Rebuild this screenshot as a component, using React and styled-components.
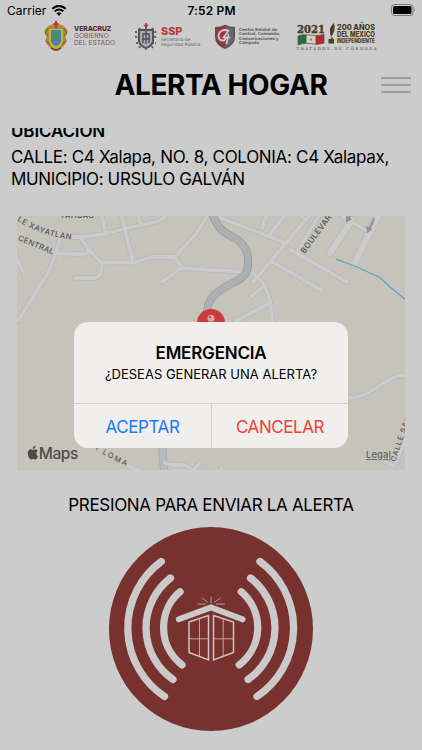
import React from "react";
import styled, { createGlobalStyle } from "styled-components";

const roads = [
  "M72 237 H80 L105 234 L123 229 L156 222 Q164 219 167 214",
  "M101.5 214 L106 234",
  "M121 214 L133.3 262.7",
  "M138 214 L140.7 225",
  "M81 238 L89 250 L101.7 262.7 V269 Q101 278 93 278 H75.5",
  "M55 253.5 L82 254 Q89 254 89 249",
  "M60 239 L54 259 Q51 267 46.7 275 L18.3 320.5",
  "M14 253 L24 273",
  "M101.7 262.7 H133.3 L151.7 257 H175 L181.7 268 L210 270 L247 271.7",
  "M162 281.7 L181.7 268",
  "M175 257 L196.7 233 L208 214",
  "M214 215.5 L286.7 243.3",
  "M262 228 L267 214",
  "M309 216 L286 243 L253.5 281.7",
  "M270 234 L286 214",
  "M299 214 L305 220",
  "M271.7 261.7 L321.5 290",
  "M290 249.5 L347 282",
  "M297 252 L320 214",
  "M340 214 L352 222 L371.7 234",
  "M249 271.7 Q257 275 262 282 Q268 291 270 301 L272.7 324",
  "M251.5 296 L262.5 287.5",
  "M270 303 L236 321",
  "M346 398 Q360 398 369 392 L389 380 Q397 375 407 375.5",
  "M165 463 Q172 466 178 465 Q185 464 190 468",
  "M191 472 L200 463",
  "M128 466 L142 472",
  "M385 462 L394 466 L407 436",
  "M221.7 468 V472",
];

const wideRoads = ["M352 220 L330 253", "M379 214 L354.3 264"];

const highway =
  "M212 213 C217 226 221 231 231 236 C243 242 249 250 248 263 C248 274 243 278 233 283 C218 290 210 297 208 306 L205 325";

const StreetMap = () => (
  <MapDrawing viewBox="17 216 388 254">
    <g fill="none" strokeLinecap="round" strokeLinejoin="round">
      <path d="M161.5 440 L164.5 474" stroke="#a6a7ac" strokeWidth="8.2" />
      <path d="M161.5 440 L164.5 474" stroke="#b8b9bd" strokeWidth="6.6" />
      {roads.map((d) => (
        <path key={d} d={d} stroke="#b4b4b8" strokeWidth="5" />
      ))}
      {wideRoads.map((d) => (
        <path key={d} d={d} stroke="#b4b4b8" strokeWidth="7.8" />
      ))}
      {roads.map((d) => (
        <path key={d} d={d} stroke="#cbcbcd" strokeWidth="3.8" />
      ))}
      {wideRoads.map((d) => (
        <path key={d} d={d} stroke="#cbcbcd" strokeWidth="6.6" />
      ))}
      <path d={highway} stroke="#92979a" strokeWidth="8" />
      <path d={highway} stroke="#abb0b3" strokeWidth="6.6" />
      <path
        d="M336.7 259.3 L357 267 L380 277.5 L390 287 L406 300"
        stroke="#5ba5be"
        strokeWidth="1.3"
      />
      <path d="M350 216 L347.5 220" stroke="#919196" strokeWidth="2.2" />
      <path d="M374 219 L369 230" stroke="#919196" strokeWidth="2" />
    </g>
    <g fill="#919196">
      <path d="M346 216 L352 219 L346 223 Z" />
      <path d="M366 226 L372.5 229 L367 233.5 Z" />
    </g>
    <g fontFamily="Inter, sans-serif" fontSize="7.7" fontWeight="500" fill="#555556">
      <path id="xayatlan" d="M17 220.5 Q44 237.5 74 239.5" fill="none" />
      <path id="central" d="M17.5 240 L55 255.5" fill="none" />
      <path id="loma" d="M88 444 Q105 457 131 468" fill="none" />
      <text>
        <textPath href="#xayatlan" textLength="58">LE XAYATLAN</textPath>
      </text>
      <text>
        <textPath href="#central" textLength="38">CENTRAL</textPath>
      </text>
      <text fontSize="7.3">
        <textPath href="#loma" textLength="44">LA LOMA</textPath>
      </text>
      <text x="60" y="218.3" textLength="34">YAHUAC</text>
      <text x="0" y="0" fontSize="8" textLength="52" transform="translate(304.5 254) rotate(-53.5)">
        BOULEVARD
      </text>
      <text x="0" y="0" fontSize="7.3" textLength="52" transform="translate(395.5 462) rotate(-72)">
        CALLE SALA
      </text>
    </g>
    <circle cx="211" cy="323" r="14" fill="#cb3b40" />
    <circle cx="211" cy="318.3" r="3.5" fill="#dca5a4" />
    <circle cx="210" cy="317.2" r="1.1" fill="#cb3b40" />
    <path
      d="M36.6 450.4c-.9-1.2-2.3-.9-3.2-.4-.6.3-.9.3-1.5 0-2.2-1.1-4.4.3-4.4 3.7 0 2.8 2 6 3.6 6 .8 0 1-.5 2-.5s1.2.5 2 .5c1.2 0 2.3-1.9 2.7-3.2-2.2-1-2.4-4.3-.2-5.4zM32.5 449.4c-.1-1.7 1.1-3.2 2.7-3.3.2 1.7-1.2 3.3-2.7 3.3z"
      transform="translate(.3 -.3)"
      fill="#4c4b49"
    />
    <text x="38.8" y="459" textLength="39.5" fontFamily="Inter, sans-serif" fontSize="15.5" fontWeight="500" fill="#4c4b49">
      Maps
    </text>
    <text x="366" y="458" textLength="25" fontFamily="Inter, sans-serif" fontSize="9.3" fontWeight="600" fill="#6c6b69" textDecoration="underline">
      Legal
    </text>
  </MapDrawing>
);

const VeracruzCrest = () => (
  <svg width="26" height="32" viewBox="0 0 26 32">
    <path d="M5 5 Q13 1 21 5 L25 10 L22 15 L24 20 Q20 28 13 30 Q6 28 2 20 L4 15 L1 10Z" fill="#aa8a36" />
    <path d="M5 8 L2 12 L5 16 M21 8 L24 12 L21 16 M4 20 L7 24 M22 20 L19 24" stroke="#735a32" fill="none" />
    <path d="M6 8 H20 V20 Q19 26 13 28 Q7 26 6 20Z" fill="#c8b23f" />
    <path d="M8 9 H18 V20 Q17 24 13 25 Q9 24 8 20Z" fill="#3e8b9a" />
    <path d="M8 16 H18 V20 Q17 24 13 25 Q9 24 8 20Z" fill="#547eae" />
    <path d="M11 11 H15 V20 H11Z" fill="#4c9151" />
    <path d="M8 27 Q13 31 18 27" stroke="#7b3b34" strokeWidth="1.5" fill="none" />
    <path d="M13 0 V7 M10.5 3 H15.5" stroke="#b5343d" strokeWidth="2" />
  </svg>
);

const PoliceCrest = () => (
  <svg width="24" height="28" viewBox="0 0 24 28">
    <path d="M12 3 V27 M1 9 H23 M1 14 H23 M2 20 H22 M5 5 L19 25 M19 5 L5 25" stroke="#5b5d61" strokeWidth="1.8" strokeDasharray="2 1.2" />
    <path d="M4 6 H20 V18 Q19 24 12 26 Q5 24 4 18Z" fill="#505358" />
    <path d="M6 8 H18 V18 Q17 22 12 24 Q7 22 6 18Z" fill="#aaacaf" />
    <path d="M9 20 V11 H15 V20 M12 8 V21 M8 16 H16" stroke="#484b50" strokeWidth="1.3" fill="none" />
    <path d="M12 0 V6 M9.8 2.5 H14.2" stroke="#b5343d" strokeWidth="1.7" />
  </svg>
);

const C4Shield = () => (
  <svg width="22" height="26" viewBox="0 0 22 26">
    <path d="M11 .8 Q16 3 21 3 V13 Q21 21 11 25 Q1 21 1 13 V3 Q6 3 11 .8Z" fill="#535256" />
    <path d="M11 2.2 Q6 4.5 2.3 4.3 V13 Q2.3 20 11 23.5Z" fill="#9e353b" />
    <path d="M11 2.2 Q16 4.5 19.7 4.3 V13 Q19.7 20 11 23.5Z" fill="#68686b" />
    <path d="M14 6.5 Q6 4.5 4.5 11.5 Q4.5 17 10 16.5 L12.5 13.5" stroke="#c9c9c9" strokeWidth="1.9" fill="none" />
    <path d="M15 6 L9.5 13.5 H16.5 M14.5 10 L12.5 20" stroke="#c9c9c9" strokeWidth="1.6" fill="none" />
  </svg>
);

const AnniversaryLogo = () => (
  <svg width="84" height="30" viewBox="295 22 84 30">
    <g fontFamily="Inter, sans-serif" fontWeight="800" fill="#463a21">
      <text
        x="297"
        y="33"
        fontFamily="DejaVu Serif, serif"
        fontSize="11.5"
        textLength="28"
        lengthAdjust="spacingAndGlyphs"
        stroke="#463a21"
        strokeWidth=".4"
      >
        2021
      </text>
      <text x="337" y="30" fontSize="7.2" textLength="38" lengthAdjust="spacingAndGlyphs">
        200 AÑOS
      </text>
      <text x="337" y="37" fontSize="7.2" textLength="38" lengthAdjust="spacingAndGlyphs">
        DEL MÉXICO
      </text>
      <text x="337" y="43.3" fontSize="5.6" textLength="38" lengthAdjust="spacingAndGlyphs">
        INDEPENDIENTE
      </text>
      <text x="296.5" y="50.2" fontFamily="DejaVu Serif, serif" fontSize="3.8" fontWeight="400" textLength="80">
        TRATADOS DE CÓRDOBA
      </text>
    </g>
    <path d="M298 36 Q303 34 309 35 Q316 36.5 324 34.5 V43 Q317 45.5 310 43.5 Q304 42.5 298 45Z" fill="#d0cfca" stroke="#52482f" strokeWidth=".7" />
    <path d="M298 36 Q302 34.3 306.5 34.8 V43 Q302 43 298 45Z" fill="#286d42" />
    <path d="M315.5 35.8 Q320 35.6 324 34.5 V43 Q320 44.5 315.5 44.3Z" fill="#b0292f" />
    <circle cx="311" cy="39.5" r="1.2" fill="#9b8257" />
    <path d="M334 23 Q329 27 330 33 L331 37 Q336 31 334 23Z M330.5 37.5 H333 L332.5 39 H334 V43.5 H328.5 V39 H331Z" fill="#4e4023" />
  </svg>
);

const AlarmIcon = () => (
  <svg width="204" height="204" viewBox="109 527.5 204 204">
    <circle cx="211" cy="629.5" r="102" fill="#773230" />
    <g fill="none" stroke="#cbc9c9" strokeLinecap="round" strokeWidth="7.3">
      <path d="M161.3 562 A82.5 82.5 0 0 0 164.5 697" />
      <path d="M170.5 578.5 A63 63 0 0 0 173 680" />
      <path d="M180 592.3 A47 47 0 0 0 182 665.3" />
      <path d="M260 562 A82.5 82.5 0 0 1 257 697" />
      <path d="M250.5 578.5 A63 63 0 0 1 248 680" />
      <path d="M241.3 592.3 A47 47 0 0 1 239.3 665.3" />
    </g>
    <path d="M178.8 619.8 L211 608 L242.5 619.8" fill="none" stroke="#cbc9c9" strokeWidth="6" strokeLinecap="round" />
    <g fill="none" stroke="#d3c2c0">
      <path d="M189 622.5 L208.5 616 V660.5 L189 653Z M213.5 616 L233.5 622.5 V653 L213.5 660.5Z" strokeWidth="1.5" />
      <path d="M199.5 619 V657 M189 639.3 H208.5 M223.2 619 V657 M213.5 639.3 H233.5" strokeWidth=".8" />
      <path d="M197.5 604.5 H206 M202 598.5 L208 603 M211 597 V604 M220.5 598.5 L214 603 M216 604.5 H225" strokeWidth=".7" />
    </g>
  </svg>
);

const App = () => {
  return (
    <Screen>
      <GlobalStyle />
      <StatusBar>
        <Carrier>
          <span>Carrier</span>
          <svg width="16" height="11" viewBox="0 0 15 11">
            <path d="M.8 3.8 Q7.5 -2 14.2 3.8" stroke="#000" strokeWidth="2" fill="none" />
            <path d="M3.1 6.4 Q7.5 2.6 11.9 6.4" stroke="#000" strokeWidth="1.9" fill="none" />
            <path d="M5 8.3 Q7.5 6.2 10 8.3 L7.5 10.9Z" />
          </svg>
        </Carrier>
        <Clock>7:52 PM</Clock>
        <Battery>
          <svg width="25" height="12" viewBox="0 0 25 12">
            <rect x=".5" y=".5" width="21.5" height="11" rx="3" fill="none" stroke="#77777a" />
            <rect x="2" y="2" width="18.5" height="8" rx="1.6" />
            <path d="M23.2 4 Q24.7 6 23.2 8Z" fill="#77777a" />
          </svg>
        </Battery>
      </StatusBar>

      <Logos>
        <Veracruz>
          <VeracruzCrest />
          <VeracruzName>
            <strong>VERACRUZ</strong>
            <span>GOBIERNO</span>
            <span>DEL ESTADO</span>
          </VeracruzName>
        </Veracruz>
        <Police>
          <PoliceCrest />
          <PoliceName>
            <strong>SSP</strong>
            <span>Secretaría de</span>
            <span>Seguridad Pública</span>
          </PoliceName>
        </Police>
        <Center>
          <C4Shield />
          <CenterName>
            <span>Centro Estatal de</span>
            <span>Control, Comando,</span>
            <span>Comunicaciones y</span>
            <span>Cómputo</span>
          </CenterName>
        </Center>
        <Logo>
          <AnniversaryLogo />
        </Logo>
      </Logos>

      <Header>
        <Title>ALERTA HOGAR</Title>
        <MenuButton aria-label="Menú">
          <MenuLine />
          <MenuLine />
          <MenuLine />
        </MenuButton>
      </Header>

      <Content>
        <LocationTitle>UBICACIÓN</LocationTitle>
        <Address>
          <AddressLine $spacing="-0.31px">CALLE: C4 Xalapa, NO. 8, COLONIA: C4 Xalapax,</AddressLine>
          <AddressLine $spacing="-0.35px">MUNICIPIO: URSULO GALVÁN</AddressLine>
        </Address>
        <StreetMap />
        <Instruction>PRESIONA PARA ENVIAR LA ALERTA</Instruction>
        <AlarmButton aria-label="Enviar alerta">
          <AlarmIcon />
        </AlarmButton>
      </Content>

      <Dialog role="dialog">
        <DialogBody>
          <DialogTitle>EMERGENCIA</DialogTitle>
          <DialogText>¿DESEAS GENERAR UNA ALERTA?</DialogText>
        </DialogBody>
        <DialogActions>
          <DialogButton $color="#167bf2">ACEPTAR</DialogButton>
          <DialogButton $color="#ef4037">CANCELAR</DialogButton>
        </DialogActions>
      </Dialog>
    </Screen>
  );
};

export default App;

const GlobalStyle = createGlobalStyle`
  * {
    box-sizing: border-box;
  }

  body {
    margin: 0;
    background: #cccccc;
  }

  button {
    padding: 0;
    border: none;
    background: none;
    font-family: inherit;
  }

  svg {
    display: block;
    flex-shrink: 0;
  }
`;

const Screen = styled.div`
  position: relative;
  display: flex;
  flex-direction: column;
  width: 422px;
  height: 750px;
  overflow: hidden;
  background: #cccccc;
  color: #000;
  font-family: Inter, "Liberation Sans", sans-serif;
  white-space: nowrap;
`;

const StatusBar = styled.div`
  display: grid;
  grid-template-columns: 1fr auto 1fr;
  align-items: center;
  height: 20px;
  padding: 0 6px 0 7px;
  font-size: 12px;
`;

const Carrier = styled.div`
  display: flex;
  align-items: center;
  gap: 5px;
`;

const Clock = styled.div`
  font-weight: 600;
  letter-spacing: 0.15px;
`;

const Battery = styled.div`
  display: flex;
  justify-content: flex-end;
`;

const Logos = styled.div`
  display: flex;
  height: 33px;
  padding-left: 43px;
`;

const Logo = styled.div`
  display: flex;
  align-items: center;
`;

const Veracruz = styled(Logo)`
  width: 91px;
  gap: 5px;
`;

const Police = styled(Logo)`
  width: 80px;
  gap: 3px;
`;

const Center = styled(Logo)`
  width: 81px;
  gap: 3px;
`;

const LogoText = styled.div`
  display: flex;
  flex-direction: column;
`;

const VeracruzName = styled(LogoText)`
  font-size: 6.7px;
  line-height: 7px;
  color: #73585c;

  strong {
    font-weight: 800;
    color: #572832;
  }
`;

const PoliceName = styled(LogoText)`
  font-family: "DejaVu Sans", sans-serif;
  font-size: 4.4px;
  line-height: 5px;
  color: #626266;

  strong {
    font-family: Inter, sans-serif;
    font-size: 10.8px;
    line-height: 10px;
    font-weight: 800;
    color: #b53a40;
  }
`;

const CenterName = styled(LogoText)`
  font-family: "DejaVu Sans", sans-serif;
  font-size: 4.2px;
  line-height: 4.3px;
  font-weight: 700;
  letter-spacing: -0.17px;
  color: #626266;
`;

const Header = styled.div`
  display: grid;
  grid-template-columns: 30px 1fr 30px;
  align-items: center;
  height: 75px;
  padding: 0 11px 11px;
`;

const Title = styled.h1`
  grid-column: 2;
  margin: 0 0 0 20px;
  text-align: center;
  font-size: 28px;
  line-height: 34px;
  font-weight: 700;
  letter-spacing: -0.4px;
`;

const MenuButton = styled.button`
  display: flex;
  flex-direction: column;
  gap: 5px;
`;

const MenuLine = styled.span`
  width: 30px;
  height: 2px;
  background: #9c9c9c;
`;

const Content = styled.div`
  display: flex;
  flex-direction: column;
  flex: 1;
  overflow: hidden;
`;

const LocationTitle = styled.h2`
  margin: -8px 0 0 11px;
  font-size: 17px;
  line-height: 22px;
  font-weight: 600;
  letter-spacing: -0.15px;
`;

const Address = styled.div`
  display: flex;
  flex-direction: column;
  margin: 4px 0 0 11px;
  font-size: 17px;
  line-height: 22px;
`;

const AddressLine = styled.span`
  letter-spacing: ${({ $spacing }) => $spacing};
`;

const MapDrawing = styled.svg`
  width: 388px;
  height: 254px;
  margin: 26px 0 0 17px;
  background: #c6c3bb;
`;

const Instruction = styled.p`
  margin: 23px 0 0;
  text-align: center;
  font-size: 17px;
  line-height: 24px;
  letter-spacing: -0.33px;
`;

const AlarmButton = styled.button`
  align-self: center;
  margin-top: 10px;
`;

const Dialog = styled.div`
  position: absolute;
  top: 322px;
  left: 74px;
  display: flex;
  flex-direction: column;
  width: 274px;
  height: 126px;
  overflow: hidden;
  border-radius: 14px;
  background: #f1efed;
`;

const DialogBody = styled.div`
  display: flex;
  flex-direction: column;
  align-items: center;
  flex: 1;
  padding-top: 20px;
`;

const DialogTitle = styled.h3`
  margin: 0;
  font-size: 17px;
  line-height: 22px;
  font-weight: 600;
  letter-spacing: -0.2px;
`;

const DialogText = styled.p`
  margin: 1px 0 0;
  font-size: 13px;
  line-height: 18px;
`;

const DialogActions = styled.div`
  display: grid;
  grid-template-columns: 1fr 1fr;
  height: 45px;
  border-top: 1px solid #d2d0ce;
`;

const DialogButton = styled.button`
  padding-top: 2px;
  font-size: 17px;
  letter-spacing: -0.42px;
  color: ${({ $color }) => $color};

  & + & {
    border-left: 1px solid #d2d0ce;
  }
`;
